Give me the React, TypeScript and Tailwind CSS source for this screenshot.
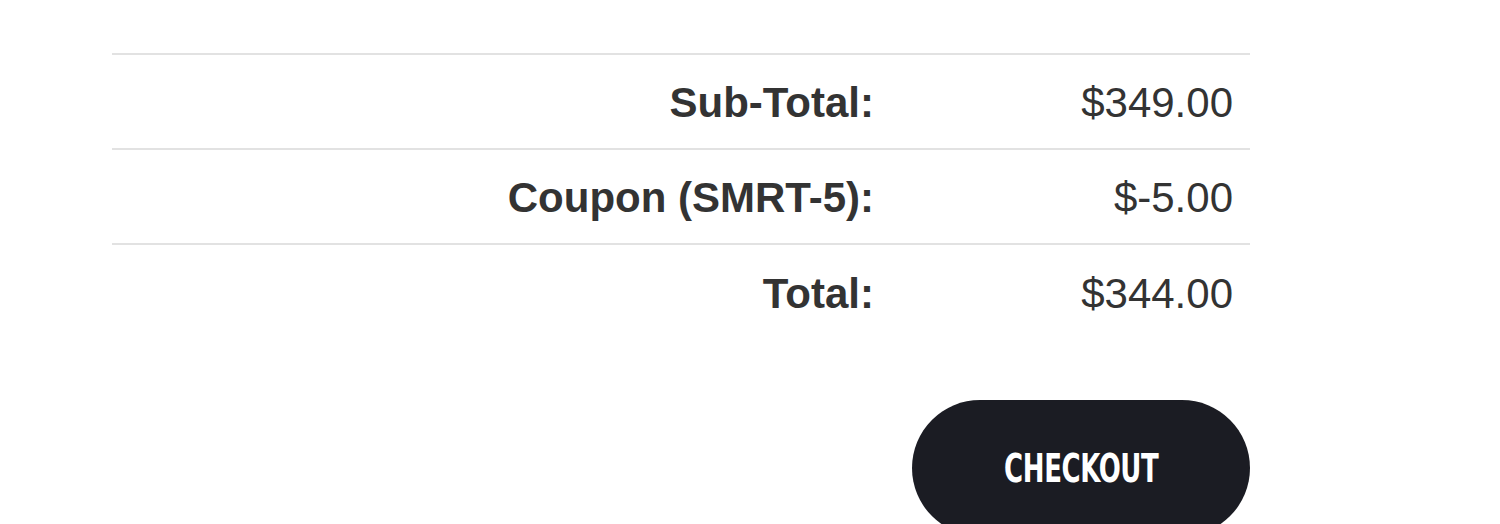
import React from 'react'

const ROWS = [
  { label: 'Sub-Total:', value: '$349.00' },
  { label: 'Coupon (SMRT-5):', value: '$-5.00' },
  { label: 'Total:', value: '$344.00' },
]

export default function App() {
  return (
    <div className="w-[1500px] h-[524px] overflow-hidden bg-white pt-[53px] pl-[112px] font-['Liberation_Sans',Arial,sans-serif] text-[#333]">
      <div className="w-[1138px]">
        {/* Totals table */}
        <div className="border-t-2 border-[#e2e2e2]">
          {ROWS.map((r, i) => (
            <div
              key={r.label}
              className={`grid grid-cols-[778px_360px] h-[95px] items-center text-[42px] pt-[2px] ${
                i < ROWS.length - 1 ? 'border-b-2 border-[#e2e2e2]' : ''
              }`}
            >
              <div className="text-right pr-[16px] font-bold">{r.label}</div>
              <div className="text-right pr-[17px]">{r.value}</div>
            </div>
          ))}
        </div>

        {/* Checkout button */}
        <div className="flex justify-end mt-[60px]">
          <button className="w-[338px] h-[136px] rounded-full bg-[#1b1c23] flex items-center justify-center">
            <span className="inline-block scale-x-[0.74] text-white font-bold text-[39px] leading-none tracking-[-0.5px] font-['Liberation_Sans_Narrow','DejaVu_Sans_Condensed',sans-serif]">
              CHECKOUT
            </span>
          </button>
        </div>
      </div>
    </div>
  )
}
